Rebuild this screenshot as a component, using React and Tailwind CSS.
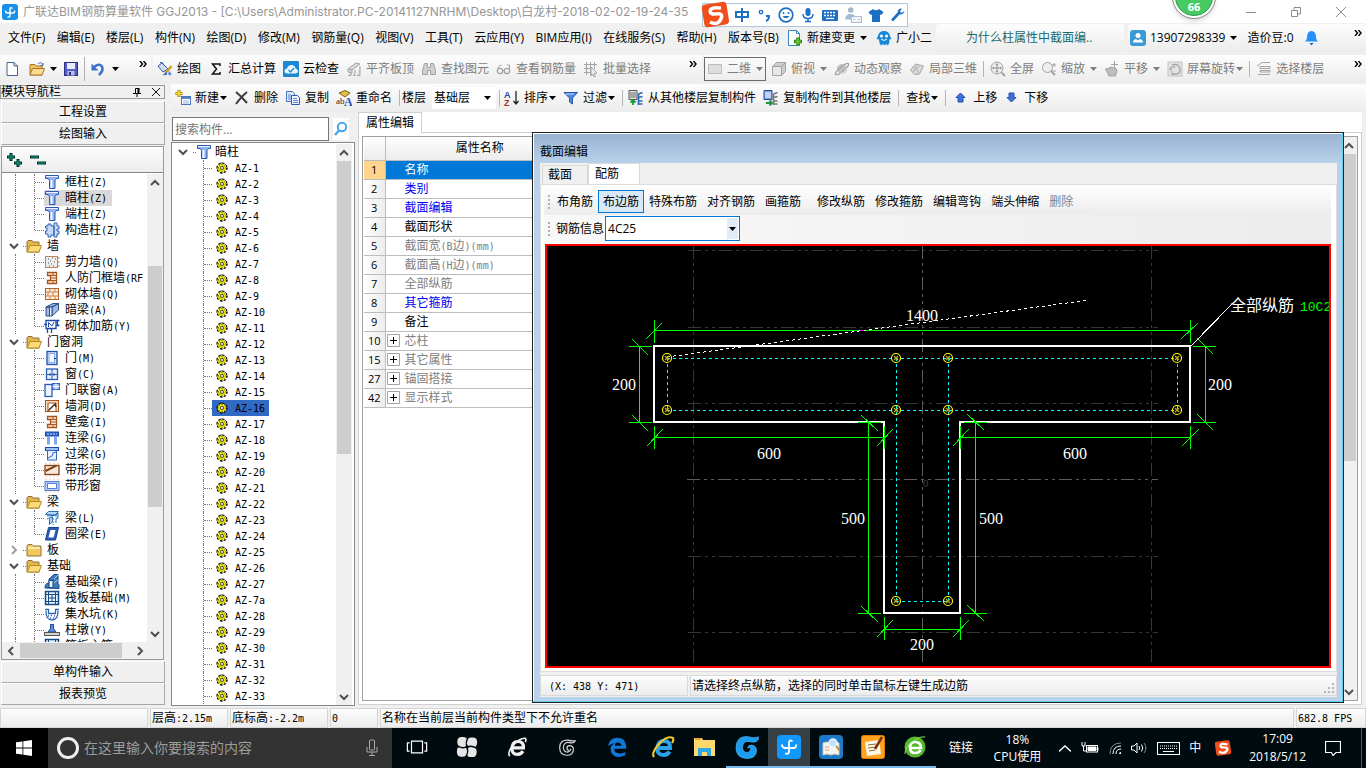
import React from "react";

/* ---------- text helpers ---------- */

// Latin runs are set in a half-width mono face beside the full-width characters.
function Song({ children }) {
  const parts = String(children).match(/[\x20-\x7e]+|[^\x20-\x7e]+/g) || [];
  return (
    <span className="whitespace-pre">
      {parts.map((p, i) =>
        /^[\x20-\x7e]/.test(p) ? (
          <span key={i} className="font-['DejaVu_Sans_Mono',monospace] text-[10px]">
            {p}
          </span>
        ) : (
          p
        )
      )}
    </span>
  );
}

/* ---------- icons ---------- */

function Svg({ size = 16, children, box = 16 }) {
  return (
    <svg width={size} height={size} viewBox={`0 0 ${box} ${box}`} fill="none" className="shrink-0" aria-hidden="true">
      {children}
    </svg>
  );
}

const B = "#2f62b5";
const G = "#a3a3a3";

const icons = {
  app: (
    <Svg>
      <rect width="16" height="16" rx="3" fill="#1a8fe8" />
      <path d="M8 4v7.500q0 2-2.500 1.500M3.500 6.500q0 2.500 2 2.500h5.500q2 0 1.500-2.500M10.500 4.500Q8 2.500 8 5" stroke="#fff" strokeWidth="1.400" />
    </Svg>
  ),
  file: (
    <Svg>
      <path d="M3 1.500h7l3.500 3.500v9.500H3z" fill="#fff" stroke="#46638c" />
      <path d="M10 1.500V5h3.500" stroke="#46638c" />
    </Svg>
  ),
  open: (
    <Svg>
      <path d="M1 3.500h5l1 1.500h6v9H1z" fill="#f2c462" stroke="#a5772a" />
      <path d="M3.500 7.500h12L13 14H1z" fill="#fbdc8c" stroke="#a5772a" />
      <path d="M9 3q3-3 5 1m0-2v2.500h-2.500" stroke="#4a6ea8" />
    </Svg>
  ),
  save: (
    <Svg>
      <rect x="1.500" y="1.500" width="13" height="13" fill="#5a5fc8" stroke="#2d2f8a" />
      <rect x="4" y="2" width="8" height="6" fill="#e8ecff" />
      <rect x="4.500" y="10" width="7" height="4.500" fill="#b9bde8" />
      <rect x="6" y="11" width="2" height="3.500" fill="#2d2f8a" />
    </Svg>
  ),
  undo: (
    <Svg>
      <path d="M3.500 6.500Q9 1.500 12 5.500 14 9.500 9 14" stroke="#3f6fd0" strokeWidth="2.600" />
      <path d="M1.500 2.500v7h7z" fill="#3f6fd0" />
    </Svg>
  ),
  paint: (
    <Svg>
      <path d="M1 5l4-3 6 6-5 3z" fill="#cfe0f6" stroke="#385f9c" />
      <path d="M3 1.500q3-1 4 3" stroke="#385f9c" />
      <path d="M14.500 5l-6 7" stroke="#d89c2c" strokeWidth="2.500" />
      <path d="M9 11l-3.500 3.500 5-1z" fill="#2c62b8" />
      <path d="M12 10q3 2 2 4.500l-3-1z" fill="#4a8fe0" />
    </Svg>
  ),
  sigma: (
    <Svg>
      <path d="M12 5V3H4.500l4 5-4 5H12v-2" stroke="#111" strokeWidth="1.500" />
    </Svg>
  ),
  cloud: (
    <Svg>
      <rect width="16" height="16" rx="1" fill="#1d88d2" />
      <path d="M4.500 12.500q-3 0-3-2.500t2.500-2.500Q5 4 8.500 4T12.500 7.500q2.500.500 2.500 2.500t-3 2.500z" fill="#eaf6ff" />
      <path d="M5.500 9l2 2 3.500-4" stroke="#1d88d2" strokeWidth="1.300" />
    </Svg>
  ),
  slab: (
    <Svg>
      <path d="M2 8l8-6 4 1-8 6zM2 8v3l4 1V9M2 14.500h3V12m2 2.500h2V9m2 5.500h3V5" fill="#dcdcdc" stroke={G} />
    </Svg>
  ),
  binocular: (
    <Svg>
      <path d="M3.500 2.500h3v4h3v-4h3l2 7v4h-5v-4h-3v4h-5v-4z" fill="#cfcfcf" stroke={G} />
    </Svg>
  ),
  glasses: (
    <Svg>
      <circle cx="4" cy="10" r="2.700" stroke={G} strokeWidth="1.300" />
      <circle cx="11" cy="10" r="2.700" stroke={G} strokeWidth="1.300" />
      <path d="M1.500 9q1-5 4-5M13.500 10V4H11M6.500 9.500h2" stroke={G} />
    </Svg>
  ),
  gridSel: (
    <Svg>
      <path d="M1 3.500h13M1 7.500h9M1 11.500h7M3.500 1v13M7.500 1v13M11.500 1v7" stroke={G} />
      <path d="M8 6l6 6-3 .500 1.500 3-1.500.500-1.500-3L8 15z" fill="#eee" stroke={G} />
    </Svg>
  ),
  flat: (
    <Svg>
      <rect x="1.500" y="3.500" width="13" height="9" fill="#dedede" stroke="#bdbdbd" />
    </Svg>
  ),
  cube: (
    <Svg>
      <path d="M1.500 5.500h9v9h-9z" fill="#e8e8e8" stroke={G} />
      <path d="M1.500 5.500l4-4h9l-4 4zM10.500 5.500l4-4v9l-4 4z" fill="#cdcdcd" stroke={G} />
    </Svg>
  ),
  orbit: (
    <Svg>
      <circle cx="8" cy="8" r="5" fill="#c4c4c4" />
      <path d="M1.500 13.500q-1-2 5-7t8-4q1 2-4.500 7t-8.500 4z" stroke={G} strokeWidth="1.300" />
      <path d="M6 13q5-1 7-6" stroke="#eee" />
    </Svg>
  ),
  local3d: (
    <Svg>
      <path d="M1.500 9l5-6 8 2-4 8-5 .500z" fill="#ddd" stroke={G} />
      <path d="M4 6l7 6M8 3.500L5 11M9 12l-2-8M3 11l9-7" stroke="#bbb" />
    </Svg>
  ),
  full: (
    <Svg>
      <circle cx="7" cy="7" r="6" fill="#eee" stroke={G} />
      <path d="M7 3v8M3 7h8M6 4l1-1.500L8 4M6 10l1 1.500L8 10M4 6L2.500 7 4 8M10 6l1.500 1L10 8" stroke="#8f8f8f" />
      <path d="M11.500 11.500l3.500 3.500" stroke={G} strokeWidth="2" />
    </Svg>
  ),
  zoom: (
    <Svg>
      <circle cx="6.500" cy="6.500" r="5" fill="#eee" stroke={G} />
      <path d="M10 10l4 4" stroke={G} strokeWidth="2" />
      <path d="M11 4h4M13 2v4M11 10h4" stroke={G} />
    </Svg>
  ),
  pan: (
    <Svg>
      <path d="M1.500 8q1.500-1.500 3.500 0l1-2 6 1.500 1 2.500-1.500 5H5z" fill="#bdbdbd" stroke={G} />
      <path d="M10.500 0v7M7 3.500h7" stroke={G} />
    </Svg>
  ),
  rotate: (
    <Svg>
      <rect x="1" y="1" width="14" height="14" fill="#e2e2e2" stroke="#c4c4c4" />
      <path d="M5 4q7-2 8 4t-7 5M3 9q0-4 5-3" stroke={G} strokeWidth="1.300" />
      <path d="M5 10v4l3-1M3 9l2-1" stroke={G} />
    </Svg>
  ),
  floors: (
    <Svg>
      <path d="M1 5l5-3.500h8M4 5.500h10v2H4zM4 9.500h10v1.500H4zM2 13.500h12" stroke={G} />
    </Svg>
  ),
  newItem: (
    <Svg>
      <path d="M4 0v7M.500 3.500h7" stroke="#9a7d00" strokeWidth="3" />
      <path d="M4 .500v6M1 3.500h6" stroke="#ffe33c" strokeWidth="1.500" />
      <rect x="6.500" y="6.500" width="9" height="8" fill="#fff" stroke="#4a74bd" />
      <path d="M7 8h8" stroke="#5b86cc" strokeWidth="2" />
      <path d="M8 11h6M8 13h6" stroke="#8fb0e0" />
    </Svg>
  ),
  del: (
    <Svg>
      <path d="M2 2q5 4 11 11M13 2Q8 6 2 14" stroke="#3c3c3c" strokeWidth="2" />
    </Svg>
  ),
  copy: (
    <Svg>
      <path d="M1.500 1.500h6l2 2v8h-8z" fill="#dce8fa" stroke="#4a74bd" />
      <path d="M6.500 5.500h6l2 2v7h-8z" fill="#eef4ff" stroke="#2e5ba8" />
      <path d="M3 5h3M3 7h3M3 9h3M8 8.500h4M8 10.500h5M8 12.500h5" stroke="#5b86cc" />
    </Svg>
  ),
  rename: (
    <Svg>
      <path d="M3 3l6-2.500 5 2.500-5 4z" fill="#e3bd4a" stroke="#7d6018" />
      <text x="0" y="14" fontSize="9" fill="#222" fontFamily="Liberation Serif, serif">ab</text>
      <text x="8" y="15.500" fontSize="12" fontWeight="bold" fill="#2b55b0" fontFamily="Liberation Serif, serif">A</text>
    </Svg>
  ),
  sort: (
    <Svg>
      <text x="0" y="7.500" fontSize="9" fontWeight="bold" fill="#24489c" fontFamily="Liberation Sans, sans-serif">A</text>
      <text x="0" y="16" fontSize="9" fontWeight="bold" fill="#a3302c" fontFamily="Liberation Sans, sans-serif">Z</text>
      <path d="M12 1v13M9.500 11l2.500 3 2.500-3" stroke="#222" strokeWidth="1.300" />
    </Svg>
  ),
  filter: (
    <Svg>
      <path d="M1 2.500h13.500L9.500 8v6l-3-2V8z" fill="#4f88e0" stroke="#2658ae" />
      <path d="M3 4h8" stroke="#c3dafc" />
    </Svg>
  ),
  floorCopy: (
    <Svg>
      <path d="M1 .500h8v9H1z" fill="#e6e6e6" stroke="#555" />
      <path d="M2 3h6M2 5h6M2 7h6" stroke="#666" />
      <path d="M5 10v5M2.500 12.500L5 10l2.500 2.500" stroke="#189a3c" strokeWidth="1.800" />
      <path d="M10.500 4l4-1.500M10.500 7.500l4-1M10.500 11h4M10.500 14h4M10.500 4v11" stroke="#2f67b8" strokeWidth="1.700" />
    </Svg>
  ),
  copyFloor: (
    <Svg>
      <path d="M1 .500h8v9H1z" fill="#7ea6e0" stroke="#24489c" />
      <path d="M2 3h6M2 5h6M2 7h6" stroke="#fff" />
      <path d="M3 13h6M6.500 10.500L9 13l-2.500 2.500" stroke="#189a3c" strokeWidth="1.800" />
      <path d="M10.500 4l4-1.500M10.500 7.500l4-1M10.500 11h4M10.500 14h4M10.500 4v11" stroke="#777" strokeWidth="1.700" />
    </Svg>
  ),
  up: (
    <Svg>
      <path d="M7.500 3l4.500 4.500h-2V12H5V7.500H3z" fill="#3f6fd8" stroke="#2850a8" />
    </Svg>
  ),
  down: (
    <Svg>
      <path d="M7.500 12L12 7.500h-2V3H5v4.500H3z" fill="#3f6fd8" stroke="#2850a8" />
    </Svg>
  ),
  change: (
    <Svg>
      <path d="M1.500.500h8l3 3v12h-11z" fill="#fff" stroke="#3787c0" />
      <path d="M9.500.500v3h3" stroke="#3787c0" />
      <path d="M11 7.500v8M7 11.500h8" stroke="#2f7d12" strokeWidth="3.500" />
      <path d="M11 8.500v6M8 11.500h6" stroke="#61c531" strokeWidth="2" />
    </Svg>
  ),
  robot: (
    <Svg>
      <path d="M2 6q1-5 6-5t6 5l1.500 3-2 .500q0 4-1.500 6l-2-1.500-1.500 1.500-1.500-1.500-2 1.500q-2-2-2-6L.500 9z" fill="#1787d8" />
      <circle cx="5.500" cy="6" r="1.500" fill="#fff" />
      <circle cx="10.500" cy="6" r="1.500" fill="#fff" />
      <path d="M5 9q3 3 6 0" stroke="#fff" />
    </Svg>
  ),
  avatar: (
    <Svg>
      <rect width="16" height="16" rx="3" fill="#3a9ad6" />
      <circle cx="8" cy="5.500" r="2.500" fill="#fff" />
      <path d="M3 12.500q0-2.500 3-3.500l2 1.500L10 9q3 1 3 3.500z" fill="#fff" />
    </Svg>
  ),
  bell: (
    <Svg>
      <path d="M7.500 1q4.500 .500 4.500 6 0 3 2 4.500H1q2-1.500 2-4.500 0-5.500 4.500-6z" fill="#2390ff" />
      <path d="M5.500 13h4l-2 2.500z" fill="#1560b8" />
    </Svg>
  ),
  search: (
    <Svg>
      <circle cx="9" cy="6" r="4.200" stroke="#45a7e6" strokeWidth="2" />
      <path d="M6 9.500l-4 4.500" stroke="#45a7e6" strokeWidth="2.500" />
    </Svg>
  ),
  folder: (
    <Svg>
      <path d="M1 3.500l1-1h4l1 1.500h6V14H1z" fill="#e7b64b" stroke="#8d7440" />
      <path d="M4 7.500h11.500L13 14H1z" fill="#ffd976" stroke="#b28a30" />
    </Svg>
  ),
  folderShut: (
    <Svg>
      <path d="M1 4l1-1.500h4L7.500 4H15v10H1z" fill="#f3c75c" stroke="#8d7440" />
      <path d="M2 6h12" stroke="#ffe9a8" strokeWidth="2" />
    </Svg>
  ),
  column: (
    <Svg>
      <path d="M1.500 1.500h13v3h-2l-1.500 2v8H5.500v-8l-1.500-2H1.500z" fill="#8fb3f2" stroke="#2f56ae" />
      <path d="M7.500 6v8" stroke="#f2f7ff" strokeWidth="2" />
      <path d="M2 2.500h12" stroke="#eaf2ff" />
    </Svg>
  ),
  gz: (
    <Svg>
      <path d="M4 2h3v2h3V1h3v3h2v3h-2v2h2v3h-2v3h-3v-2H7v2H4v-3H1.500V9H3V6H1.500V4H4z" fill="#c7daf8" stroke={B} />
      <path d="M10 4v9" stroke={B} strokeWidth="1.500" />
    </Svg>
  ),
  wallQ: (
    <Svg>
      <rect x="1.500" y="2.500" width="12" height="11" fill="#eee" stroke="#c2825a" />
      <path d="M4 5h1M8 4h1M6 7h1M10 8h1M4 9h1M7 10h1M9 12h1M5 12h1M11 5h1" stroke="#555" strokeWidth="1.200" />
      <path d="M14 4h1.500M14 8h1.500M14 12h1.500" stroke="#c25a20" />
    </Svg>
  ),
  frameWall: (
    <Svg>
      <path d="M3.500 2.500h9v11h-9v-3h3v-5h-3z" fill="#fbe6d4" stroke="#a9541c" strokeWidth="1.300" />
      <path d="M6.500 5.500h6M6.500 8h6M6.500 10.500h6M9 2.500v3M9 10.500v3" stroke="#a9541c" />
    </Svg>
  ),
  brick: (
    <Svg>
      <rect x="1.500" y="2.500" width="13" height="11" fill="#fdeedd" stroke="#b5632b" />
      <path d="M2 6h12M2 10h12M6 3v3M11 3v3M4 6v4M9 6v4M6 10v3M11 10v3" stroke="#c98251" />
    </Svg>
  ),
  hiddenBeam: (
    <Svg>
      <path d="M2 5l7-3.500h5.500L8 5zM2 5h3.500v9H2zM8 5l6.500-3.500V8L8 14z" fill="#9dbbe4" stroke="#2e4f86" />
      <path d="M5.500 5v9H8V5z" fill="#e9f1fc" stroke="#2e4f86" />
    </Svg>
  ),
  rebar: (
    <Svg>
      <path d="M2 2.500h10v8H2zM0 6.500h3M12 2.500h3.500M12 7.500h3.500M13.500 3v4M3.500 10.500V15M7.500 10.500V15" stroke="#1c49ad" strokeWidth="1.300" />
      <path d="M4.500 9V4.500L8 8l2-4" stroke="#1c49ad" />
    </Svg>
  ),
  door: (
    <Svg>
      <rect x="3" y="1.500" width="10" height="13" fill="#cfe0fa" stroke="#1c50b4" strokeWidth="1.300" />
      <rect x="5" y="3.500" width="5.500" height="9" fill="#f4f8ff" stroke="#87ace8" />
      <path d="M10 8.500h2" stroke="#143a84" />
    </Svg>
  ),
  window: (
    <Svg>
      <rect x="2.500" y="3" width="11" height="10.500" fill="#e6f0ff" stroke="#2c5cb8" strokeWidth="1.300" />
      <path d="M8 3v10M3 8.500h10" stroke="#2c5cb8" />
      <path d="M5 8.500h2M9 8.500h2" stroke="#2c5cb8" strokeWidth="2" />
    </Svg>
  ),
  doorWin: (
    <Svg>
      <rect x="1" y="2.500" width="7" height="12" fill="#eef4ff" stroke="#2c5cb8" strokeWidth="1.300" />
      <rect x="8.500" y="1.500" width="7" height="6" fill="#9fc0f5" stroke="#2c5cb8" />
      <path d="M12 1.500v6M8.500 4.500h7" stroke="#fff" />
    </Svg>
  ),
  hole: (
    <Svg>
      <rect x="1.500" y="2.500" width="13" height="11" fill="#f5dfca" stroke="#a9541c" />
      <rect x="4" y="5" width="8" height="8.500" fill="#fff" stroke="#a9541c" />
      <path d="M4.500 12.500L11 6l1 3" stroke="#33241a" strokeWidth="1.400" />
    </Svg>
  ),
  linkBeam: (
    <Svg>
      <rect x="1.500" y="2" width="13" height="4" fill="#2d66c8" stroke="#1a4aa2" />
      <path d="M3 4h10" stroke="#c5dbff" strokeDasharray="2 1" />
      <path d="M4.500 6v8.500M11.500 6v8.500" stroke="#7fa9ee" strokeWidth="3" />
    </Svg>
  ),
  lintel: (
    <Svg>
      <rect x="1.500" y="1.500" width="13" height="3" fill="#9dc0f6" stroke="#1a4aa2" />
      <path d="M3.500 4.500h9v9.500h-9z" fill="#eaf2ff" stroke="#2d66c8" />
      <path d="M4 12l4-2 1-3 3-1" stroke="#2d66c8" />
    </Svg>
  ),
  bandHole: (
    <Svg>
      <path d="M2 .500v15M6 .500v15M10 .500v15M14 .500v15" stroke="#f1b9a6" strokeDasharray="2 2" />
      <rect x="1" y="3.500" width="14" height="9" fill="#f8e8da" stroke="#87431a" strokeWidth="1.300" />
      <path d="M1.500 9l11-5.500" stroke="#87431a" strokeWidth="2" />
    </Svg>
  ),
  bandWin: (
    <Svg>
      <path d="M2 .500v15M6 .500v15M10 .500v15M14 .500v15" stroke="#f1b9a6" strokeDasharray="2 2" />
      <rect x="1" y="3.500" width="14" height="9" fill="#b5cef7" stroke="#5b7fd0" />
      <rect x="3.500" y="5.500" width="9" height="5" fill="#fff" stroke="#5b7fd0" />
    </Svg>
  ),
  beam: (
    <Svg>
      <path d="M1.500 4.500l3-3h10l-3 3.500zM3 6l10-1M5.500 8v6.500l3-3V7zM11 5l3-2v5l-2 1v4" fill="#b5d8f5" stroke="#2a6fb5" />
      <path d="M9 8v7M3 9l8-4" stroke="#2a6fb5" strokeDasharray="2 1" />
    </Svg>
  ),
  ring: (
    <Svg>
      <path d="M4.500 1.500h10l-3 12.500h-10z" fill="#2c5eb8" stroke="#173f8c" />
      <path d="M6.500 4h5L9.500 11.500h-5z" fill="#fff" />
    </Svg>
  ),
  fBeam: (
    <Svg>
      <path d="M1 14q0-5 4-5V5l5-4.500h4v9l1 1.500v3.500z" fill="#3d78b8" stroke="#174b86" />
      <path d="M5 6.500h4v7H5z" fill="#e6f1fc" stroke="#174b86" />
      <path d="M10 5l4-4M10 9l4-3" stroke="#a9cff2" />
    </Svg>
  ),
  raft: (
    <Svg>
      <rect x="1.500" y="1.500" width="13" height="13" fill="#e6f2fd" stroke="#174b86" strokeWidth="1.500" />
      <path d="M4.500 2v12M11.500 2v12M2 4.500h12M2 11.500h12M8 4.500v7M4.500 8h7" stroke="#174b86" />
    </Svg>
  ),
  pit: (
    <Svg>
      <path d="M1 3.500h3.500v4h7v-4H15M2 5q0 9 6 9t6-9" stroke="#2a66b8" strokeWidth="1.300" />
      <path d="M4 10h1M7 9.500h1M10 10h1M6 12h1M9 12h1" stroke="#2a66b8" strokeWidth="1.300" />
    </Svg>
  ),
  pier: (
    <Svg>
      <path d="M6.500 2.500h3v4l2.500 3.500H4L6.500 6.500z" fill="#5d8fd8" stroke="#1c4a94" />
      <rect x=".500" y="10.500" width="15" height="3" fill="#d3d3d3" stroke="#555" />
    </Svg>
  ),
  gear: (
    <Svg size={12} box={12}>
      <circle cx="6" cy="6" r="4.800" stroke="#111" strokeWidth="1.700" strokeDasharray="1.900 1.870" />
      <circle cx="6" cy="6" r="4.300" fill="#fff200" />
      <path d="M6 0v3M6 9v3M0 6h3M9 6h3M2.200 2.200l1.500 1.500M8.300 8.300l1.500 1.500M9.800 2.200L8.300 3.700M3.700 8.300L2.200 9.800" stroke="#222" strokeWidth=".800" />
      <circle cx="6" cy="6" r="1.800" fill="#fff" stroke="#222" strokeWidth=".800" />
      <circle cx="6" cy="6" r=".600" fill="#222" />
    </Svg>
  ),
};

function Caret() {
  return (
    <svg width="7" height="4" viewBox="0 0 7 4" className="shrink-0" aria-hidden="true">
      <path d="M0 0h7L3.500 4z" fill="currentColor" />
    </svg>
  );
}

function Chevron({ dir = "down", light = false }) {
  const d = {
    down: "M1 3l4 4 4-4",
    up: "M1 7l4-4 4 4",
    left: "M7 1L3 5l4 4",
    right: "M3 1l4 4-4 4",
  }[dir];
  return (
    <svg width="10" height="10" viewBox="0 0 10 10" fill="none" className="shrink-0" aria-hidden="true">
      <path d={d} stroke={light ? "#a0a0a0" : "#505050"} strokeWidth="2" />
    </svg>
  );
}

function More() {
  return (
    <button type="button" aria-label="更多" className="flex h-4 w-2">
      <svg width="8" height="6" viewBox="0 0 8 6" fill="none" aria-hidden="true">
        <path d="M1 0l2.500 3L1 6M4.500 0L7 3 4.500 6" stroke="#000" strokeWidth="1.400" />
      </svg>
    </button>
  );
}

function Tool({ icon, label, caret, wide, dim }) {
  return (
    <button type="button" className={`flex items-center gap-1 whitespace-nowrap ${dim ? "text-[#7d7d7d]" : "text-black"}`}>
      {icon && icons[icon]}
      <span className="flex items-center">
        {label}
        {caret && (
          <span className={wide ? "flex w-3 justify-end text-current" : "flex w-2 justify-end text-current"}>
            <Caret />
          </span>
        )}
      </span>
    </button>
  );
}

function Sep() {
  return <span className="h-4 w-px shrink-0 bg-[#b5b5b5]" />;
}

const band = "bg-gradient-to-b from-[#fdfdfd] to-[#ececec]";

/* ---------- header ---------- */

function ImeBar() {
  const c = "#1d6fc4";
  return (
    <div className="absolute left-[702px] top-[3px] flex h-6 items-center gap-[6px] border border-[#b4c6dc] bg-white pl-[31px] pr-px">
      <svg className="absolute -left-[2px] -top-[3px]" width="30" height="28" viewBox="0 0 30 28" aria-hidden="true">
        <g transform="rotate(-9 15 14)">
          <rect x="2" y="2" width="25" height="23" rx="4" fill="#f04e1a" />
          <path d="M21 8q-10-3-11 1t6 4 3 6-11 1" stroke="#fff" strokeWidth="3.500" fill="none" />
        </g>
      </svg>
      <Svg><path d="M2 5h12v5H2zM8 1v14" stroke={c} strokeWidth="2" /></Svg>
      <Svg><circle cx="5" cy="5" r="1.700" stroke={c} strokeWidth="1.300" /><path d="M10 9h3q0 4-3 5" stroke={c} strokeWidth="2" /></Svg>
      <Svg><circle cx="8" cy="8" r="6.800" stroke={c} strokeWidth="1.700" /><path d="M4.500 9q3.500 4.500 7 0z" fill={c} /><circle cx="5.500" cy="6" r="1" fill={c} /><circle cx="10.500" cy="6" r="1" fill={c} /></Svg>
      <Svg><rect x="5.500" y="1" width="5" height="8" rx="2.500" fill={c} /><path d="M3 7q0 4.500 5 4.500T13 7M8 11v3M5 14.500h6" stroke={c} strokeWidth="1.500" /></Svg>
      <Svg><rect x="0" y="3" width="16" height="11" rx="1" fill={c} /><path d="M2 5.500h12M2 8.500h12" stroke="#fff" strokeDasharray="2 1" strokeWidth="1.500" /><path d="M4 11.500h8" stroke="#fff" strokeWidth="1.300" /></Svg>
      <Svg size={18}><circle cx="6" cy="3.500" r="2.500" fill="#a9b8d2" /><path d="M1 12q0-5 5-5 3 0 4 2v3z" fill="#a9b8d2" /><rect x="6.500" y="9.500" width="9" height="5" fill="#fff" stroke="#a9b8d2" /><path d="M8 12h2M12 12h2" stroke="#a9b8d2" /></Svg>
      <Svg><path d="M5 2q3 2.500 6 0l4.500 3-2 3L12 7.500V15H4V7.500L2.500 8l-2-3z" fill={c} /></Svg>
      <Svg><path d="M14.500 4l-3 2-1.500-1.500L12 1.500Q8 1 7.500 5.500L1.500 12q-.500 2 2 2l6-6.500Q14 7.500 14.500 4z" fill={c} /></Svg>
    </div>
  );
}

function TitleBar() {
  return (
    <header className="relative flex h-[23px] shrink-0 items-center bg-white pl-[2px] pr-5">
      {icons.app}
      <h1 className="ml-[5px] whitespace-nowrap font-['Inter','Noto_Sans_CJK_SC',sans-serif] text-xs text-[#969696]">
        广联达BIM钢筋算量软件 GGJ2013 - [C:\Users\Administrator.PC-20141127NRHM\Desktop\白龙村-2018-02-02-19-24-35
      </h1>
      <ImeBar />
      <div className="absolute right-[150px] -top-[25px] z-10 flex size-11 items-end justify-center rounded-full border border-[#8a8a8a] bg-white p-[2px] shadow-md">
        <span className="flex size-full items-end justify-center rounded-full border border-[#2a9a4c] bg-[#45cb62] pb-px text-[11px] font-bold leading-[14px] text-white">66</span>
      </div>
      <div className="ml-auto flex items-center gap-[35px]">
        {["M0 5.500h10", "M.500 3.500h6v6h-6zM3 3V.500h6.500V7H7", "M0 0l10 10M10 0L0 10"].map((d, i) => (
          <button key={i} type="button" aria-label={["最小化", "还原", "关闭"][i]}>
            <svg width="10" height="10" viewBox="0 0 10 10" fill="none" aria-hidden="true">
              <path d={d} stroke="#8c8c8c" />
            </svg>
          </button>
        ))}
      </div>
    </header>
  );
}

const menus = ["文件(F)", "编辑(E)", "楼层(L)", "构件(N)", "绘图(D)", "修改(M)", "钢筋量(Q)", "视图(V)", "工具(T)", "云应用(Y)", "BIM应用(I)", "在线服务(S)", "帮助(H)", "版本号(B)"];

function MenuBar() {
  return (
    <nav className="flex h-[30px] shrink-0 items-center gap-1 bg-[#f0f0f0]">
      <div className="flex w-[783px] shrink-0 items-center justify-between pl-2 pr-1">
        {menus.map((m) => (
          <button key={m} type="button" className="whitespace-nowrap">{m}</button>
        ))}
      </div>
      <div className="flex w-[145px] shrink-0 items-center justify-between">
        <Tool icon="change" label="新建变更" caret wide />
        <Tool icon="robot" label="广小二" />
      </div>
      <div className={`flex h-7 flex-1 items-center rounded-sm pl-[30px] ${band}`}>
        <a href="#tip" className="whitespace-nowrap text-[#16696e]">为什么柱属性中截面编..</a>
      </div>
      <div className={`flex h-7 w-[238px] shrink-0 items-center gap-[10px] rounded-sm pl-[2px] pr-1 ${band}`}>
        <Tool icon="avatar" label="13907298339" caret wide />
        <span className="whitespace-nowrap">造价豆:0</span>
        <button type="button" aria-label="通知">{icons.bell}</button>
        <span className="ml-auto"><More /></span>
      </div>
    </nav>
  );
}

function MainToolbar() {
  return (
    <div className="flex h-[31px] shrink-0 items-center gap-[2px] bg-[#f0f0f0]">
      <div className={`flex h-7 w-[151px] shrink-0 items-center gap-[9px] pl-1 pr-1 ${band}`}>
        <button type="button" aria-label="新建工程">{icons.file}</button>
        <button type="button" aria-label="打开" className="flex items-center gap-[5px]">{icons.open}<Caret /></button>
        <button type="button" aria-label="保存" className="-ml-[3px]">{icons.save}</button>
        <span className="-mx-1 h-6 w-px bg-[#b0b0b0]" />
        <button type="button" aria-label="撤销" className="flex items-center gap-[6px]">{icons.undo}<Caret /></button>
        <span className="ml-auto"><More /></span>
      </div>
      <div className={`flex h-7 w-[549px] shrink-0 items-center gap-[7px] pl-1 pr-[5px] ${band}`}>
        <Tool icon="paint" label="绘图" />
        <Tool icon="sigma" label="汇总计算" />
        <Tool icon="cloud" label="云检查" />
        <Tool icon="slab" label="平齐板顶" dim />
        <Tool icon="binocular" label="查找图元" dim />
        <Tool icon="glasses" label="查看钢筋量" dim />
        <Tool icon="gridSel" label="批量选择" dim />
        <span className="ml-auto"><More /></span>
      </div>
      <div className={`flex h-7 min-w-0 flex-1 items-center gap-[7px] pr-1 ${band}`}>
        <span className="-mr-[2px] flex h-6 items-center border border-[#6b6b6b] px-[2px]">
          <Tool icon="flat" label="二维" caret wide dim />
        </span>
        <Tool icon="cube" label="俯视" caret wide dim />
        <Tool icon="orbit" label="动态观察" dim />
        <Tool icon="local3d" label="局部三维" dim />
        <span className="-mx-px flex"><Sep /></span>
        <Tool icon="full" label="全屏" dim />
        <Tool icon="zoom" label="缩放" caret wide dim />
        <Tool icon="pan" label="平移" caret wide dim />
        <Tool icon="rotate" label="屏幕旋转" caret dim />
        <span className="-mx-px flex"><Sep /></span>
        <Tool icon="floors" label="选择楼层" dim />
        <span className="ml-auto"><More /></span>
      </div>
    </div>
  );
}

/* ---------- scroll bars ---------- */

function VBar({ thumb }) {
  return (
    <div className="flex w-4 shrink-0 flex-col items-center bg-[#f0f0f0]" aria-hidden="true">
      <span className="flex h-[17px] items-center"><Chevron dir="up" /></span>
      <div className="flex w-full min-h-0 flex-1 flex-col px-px">
        <div className={`w-full bg-[#cdcdcd] ${thumb}`} />
      </div>
      <span className="flex h-[17px] items-center"><Chevron /></span>
    </div>
  );
}

/* ---------- module navigation ---------- */

const navTree = [
  { icon: "column", t: "框柱(Z)" },
  { icon: "column", t: "暗柱(Z)", on: true },
  { icon: "column", t: "端柱(Z)" },
  { icon: "gz", t: "构造柱(Z)", last: true },
  { t: "墙", group: true },
  { icon: "wallQ", t: "剪力墙(Q)" },
  { icon: "frameWall", t: "人防门框墙(RF" },
  { icon: "brick", t: "砌体墙(Q)" },
  { icon: "hiddenBeam", t: "暗梁(A)" },
  { icon: "rebar", t: "砌体加筋(Y)", last: true },
  { t: "门窗洞", group: true },
  { icon: "door", t: "门(M)" },
  { icon: "window", t: "窗(C)" },
  { icon: "doorWin", t: "门联窗(A)" },
  { icon: "hole", t: "墙洞(D)" },
  { icon: "frameWall", t: "壁龛(I)" },
  { icon: "linkBeam", t: "连梁(G)" },
  { icon: "lintel", t: "过梁(G)" },
  { icon: "bandHole", t: "带形洞" },
  { icon: "bandWin", t: "带形窗", last: true },
  { t: "梁", group: true },
  { icon: "beam", t: "梁(L)" },
  { icon: "ring", t: "圈梁(E)", last: true },
  { t: "板", group: true, shut: true },
  { t: "基础", group: true },
  { icon: "fBeam", t: "基础梁(F)" },
  { icon: "raft", t: "筏板基础(M)" },
  { icon: "pit", t: "集水坑(K)" },
  { icon: "pier", t: "柱墩(Y)" },
  { icon: "raft", t: "筏板主筋(R)" },
];

function NavRow({ row }) {
  if (row.group) {
    return (
      <li className="flex h-4 items-center">
        <span className="flex w-[19px] pl-[5px]"><Chevron dir={row.shut ? "right" : "down"} light={row.shut} /></span>
        <span className="w-[3px] border-t border-dotted border-[#777]" />
        {row.shut ? icons.folderShut : icons.folder}
        <span className="ml-[5px]">{row.t}</span>
      </li>
    );
  }
  return (
    <li className="flex h-4 items-center">
      <span className="h-full w-3 shrink-0 border-r border-dotted border-[#777]" />
      <span className="h-full w-[19px] shrink-0">
        <span className={`block border-r border-dotted border-[#777] ${row.last ? "h-1/2" : "h-full"}`} />
      </span>
      <span className="w-[9px] shrink-0 border-t border-dotted border-[#777]" />
      <span className={`flex h-full items-center gap-[5px] pr-[5px] ${row.on ? "bg-[#d9d9d9]" : ""}`}>
        {icons[row.icon]}
        <Song>{row.t}</Song>
      </span>
    </li>
  );
}

function NavButton({ children }) {
  return (
    <button type="button" className="flex h-[22px] shrink-0 items-center justify-center border border-[#a8a8a8] border-l-white border-t-white bg-[#f0f0f0]">
      {children}
    </button>
  );
}

function ModuleNav() {
  return (
    <aside className="flex w-[165px] shrink-0 flex-col pb-[2px] pt-px">
      <div className="flex h-[14px] shrink-0 items-center border border-[#9a9a9a]">
        <h2 className="leading-none">模块导航栏</h2>
        <span className="ml-auto flex items-center gap-[10px] pr-1">
          <svg width="9" height="10" viewBox="0 0 9 10" fill="none" aria-hidden="true">
            <path d="M2.500 6V1.500h3V6M0 6.500h8M4 7v3" stroke="#000" />
            <path d="M5.500 1v5" stroke="#000" strokeWidth="2" />
          </svg>
          <svg width="8" height="8" viewBox="0 0 8 8" aria-hidden="true">
            <path d="M0 0l8 8M8 0L0 8" stroke="#111" />
          </svg>
        </span>
      </div>
      <div className="mt-[2px] flex shrink-0 flex-col pl-px">
        <NavButton>工程设置</NavButton>
        <NavButton>绘图输入</NavButton>
      </div>
      <div className="mx-px mt-px flex min-h-0 flex-1 flex-col border border-[#9a9a9a]">
        <div className={`flex h-[25px] shrink-0 items-center gap-[7px] pl-1 ${band}`}>
          <button type="button" aria-label="全部展开">
            <svg width="17" height="16" viewBox="0 0 17 16" fill="none" aria-hidden="true">
              <path d="M5 1v8M1 5h8M12 7v8M8 11h8" stroke="#00332f" strokeWidth="3" />
              <path d="M5 2v6M2 5h6M12 8v6M9 11h6" stroke="#14a090" />
            </svg>
          </button>
          <button type="button" aria-label="全部折叠">
            <svg width="17" height="16" viewBox="0 0 17 16" fill="none" aria-hidden="true">
              <path d="M0 5h9M7 11h9" stroke="#00332f" strokeWidth="3" />
              <path d="M1 5h7M8 11h7" stroke="#14a090" />
            </svg>
          </button>
        </div>
        <div className="flex min-h-0 flex-1 flex-col border-t border-[#828790] bg-white">
          <div className="flex min-h-0 flex-1 pt-px">
            <ul className="min-w-0 flex-1 overflow-hidden whitespace-nowrap pl-[2px]">
              {navTree.map((r, i) => (
                <NavRow key={i} row={r} />
              ))}
            </ul>
            <VBar thumb="mt-[75px] h-[241px]" />
          </div>
          <div className="flex h-[17px] shrink-0 items-center bg-[#f0f0f0] pr-[18px]" aria-hidden="true">
            <span className="flex w-[18px] pl-1"><Chevron dir="left" /></span>
            <span className="h-[15px] w-[102px] bg-[#cdcdcd]" />
            <span className="ml-auto"><Chevron dir="right" /></span>
          </div>
        </div>
      </div>
      <div className="mt-px flex shrink-0 flex-col pl-px">
        <NavButton>单构件输入</NavButton>
        <NavButton>报表预览</NavButton>
      </div>
    </aside>
  );
}

/* ---------- component list ---------- */

const items = [];
for (let i = 1; i <= 33; i++) {
  items.push(`AZ-${i}`);
  if (i === 27) items.push("AZ-7a");
}

function ComponentToolbar() {
  return (
    <div className={`flex h-7 shrink-0 items-center gap-[7px] pl-1 ${band}`}>
      <Tool icon="newItem" label="新建" caret />
      <Tool icon="del" label="删除" />
      <Tool icon="copy" label="复制" />
      <Tool icon="rename" label="重命名" />
      <span className="flex items-center gap-[2px]">
        <Sep />
        <label htmlFor="floor">楼层</label>
        <span className="relative ml-1 flex w-16 items-center bg-white">
          <select id="floor" className="h-[22px] w-full appearance-none bg-transparent pl-[2px] text-xs outline-none">
            <option>基础层</option>
          </select>
          <span className="pointer-events-none absolute right-[5px]"><Caret /></span>
        </span>
      </span>
      <span className="-ml-1 flex items-center gap-1"><Sep /><Tool icon="sort" label="排序" caret /></span>
      <Tool icon="filter" label="过滤" caret />
      <Sep />
      <span className="-ml-[2px]"><Tool icon="floorCopy" label="从其他楼层复制构件" /></span>
      <Tool icon="copyFloor" label="复制构件到其他楼层" />
      <Sep />
      <Tool label="查找" caret />
      <Sep />
      <Tool icon="up" label="上移" />
      <Tool icon="down" label="下移" />
    </div>
  );
}

function ComponentList() {
  return (
    <section className="flex w-[184px] shrink-0 flex-col pb-px pt-[5px]">
      <div className="flex h-6 shrink-0 items-center pl-px">
        <input type="search" aria-label="搜索构件" placeholder="搜索构件..." className="h-6 w-[157px] border border-[#767676] bg-white pl-[2px] text-xs outline-none placeholder:text-[#767676]" />
        <button type="button" aria-label="搜索" className="ml-1 flex h-[22px] w-4 items-center bg-white">{icons.search}</button>
      </div>
      <div className="mt-px flex min-h-0 flex-1 border border-[#828790] bg-white pt-px">
        <div className="min-w-0 flex-1 overflow-hidden">
          <div className="flex h-4 items-center">
            <span className="flex w-[21px] pl-[6px]"><Chevron /></span>
            <span className="w-[3px] border-t border-dotted border-[#777]" />
            {icons.column}
            <span className="ml-[3px]">暗柱</span>
          </div>
          <ul>
            {items.map((t) => (
              <li key={t} className="flex h-4 items-center">
                <span className="h-full w-8 shrink-0 border-r border-dotted border-[#777]" />
                <span className="w-2 shrink-0 border-t border-dotted border-[#777]" />
                <span className={`flex h-full items-center gap-[7px] pl-[4px] pr-1 ${t === "AZ-16" ? "bg-[#316ac5]" : ""}`}>
                  {icons.gear}
                  <Song>{t}</Song>
                </span>
              </li>
            ))}
          </ul>
        </div>
        <VBar thumb="h-[293px]" />
        <span className="w-[2px]" />
      </div>
    </section>
  );
}

/* ---------- property table ---------- */

const props = [
  [1, "名称", "sel"],
  [2, "类别", "blue"],
  [3, "截面编辑", "blue"],
  [4, "截面形状", "black"],
  [5, "截面宽(B边)(mm)", "gray"],
  [6, "截面高(H边)(mm)", "gray"],
  [7, "全部纵筋", "gray"],
  [8, "其它箍筋", "blue"],
  [9, "备注", "black"],
  [10, "芯柱", "gray", true],
  [15, "其它属性", "gray", true],
  [27, "锚固搭接", "gray", true],
  [42, "显示样式", "gray", true],
];
const tone = {
  sel: "bg-[#0078d7] text-white",
  blue: "text-[#0000f0]",
  black: "text-black",
  gray: "text-[#808080]",
};

function PropertyTable() {
  return (
    <table className="w-[210px] table-fixed border-collapse self-start">
      <thead>
        <tr className="h-[23px] bg-gradient-to-b from-white to-[#ececec]">
          <th className="w-[21px] border-b border-r border-[#bdbdbd] p-0" />
          <th className="border-b border-[#bdbdbd] p-0 text-center font-normal">属性名称</th>
        </tr>
      </thead>
      <tbody>
        {props.map(([n, t, k, plus]) => (
          <tr key={n} className="h-[19px]">
            <th scope="row" className={`border-b border-r border-[#bdbdbd] p-0 text-center text-[11px] font-normal leading-none ${k === "sel" ? "bg-[#ffd58d]" : "bg-gradient-to-r from-white to-[#ececec]"}`}>
              {n}
            </th>
            <td className={`border-b border-[#bdbdbd] p-0 leading-none ${tone[k]}`}>
              <span className="flex items-center">
                <span className="flex w-[19px] pl-px">
                  {plus && (
                    <svg width="13" height="13" viewBox="0 0 13 13" fill="none" aria-hidden="true">
                      <path d="M.500.500h12v12H.500z" stroke="#a5a5a5" />
                      <path d="M3 6.500h7M6.500 3v7" stroke="#000" />
                    </svg>
                  )}
                </span>
                <Song>{t}</Song>
              </span>
            </td>
          </tr>
        ))}
      </tbody>
    </table>
  );
}

/* ---------- section drawing ---------- */

const bars = [
  [667, 358], [896, 358], [948, 358], [1177, 358],
  [667, 410], [896, 410], [948, 410], [1177, 410],
  [896, 601], [948, 601],
];

function SectionDrawing() {
  const dimText = { fill: "#fff", fontSize: 16, fontFamily: "Liberation Serif, serif" };
  return (
    <svg viewBox="547 246 782 420" preserveAspectRatio="xMinYMin meet" className="block size-full bg-black" role="img" aria-label="截面配筋图">
      <g shapeRendering="crispEdges" fill="none">
        <g stroke="#363636" strokeDasharray="13 4 3 4 3 4">
          <path d="M693.500 246V666M1151.500 246V666M688 250.500H1158M688 327.500H1158M688 403.500H1158M688 556.500H1158M688 632.500H1158" />
        </g>
        <path stroke="#5c5c5c" strokeDasharray="13 4 3 4 3 4" d="M922.500 246V666M687 479.500H1158" />
        <path stroke="#00ffff" strokeDasharray="3 3" d="M667 358.500H1177M667 410.500H1177M667.500 358V410M896.500 358V601M948.500 358V601M1177.500 358V410M896 601.500H948" />
        <path stroke="#fff" strokeWidth="2" d="M654 346H1190V422H960V613H884V422H654Z" />
        <path
          stroke="#00ff00"
          d="M654 330.500H1190M654.500 320V343M1190.500 320V343M639.500 346V422M629 346.500H652M629 422.500H652M1205.500 346V422M1193 346.500H1216M1193 422.500H1216M654 437.500H884M960 437.500H1190M654.500 426V449M884.500 426V449M960.500 426V449M1190.500 426V449M868.500 422V613M858 422.500H881M858 613.500H881M975.500 422V613M964 422.500H987M964 613.500H987M884 629.500H960M884.500 617V640M960.500 617V640M646 339L662 323M1181 339L1198 323M632 339L648 355M632 415L648 431M1197 338L1213 354M1197 414L1213 430M647 446L663 429M877 446L893 429M953 446L969 429M1182 446L1199 429M861 415L878 431M861 606L878 622M967 414L984 430M967 605L984 621M877 637L893 620M953 637L969 620"
        />
        <path stroke="#fff" strokeDasharray="3 3" d="M667 357L1089 300" />
        <path stroke="#ff00ff" d="M860 330.500H864" />
        <path stroke="#fff" d="M1191 346L1232 304" />
      </g>
      {bars.map(([x, y]) => (
        <g key={`${x}-${y}`}>
          <circle cx={x} cy={y} r="4.500" fill="none" stroke="#ffff00" strokeWidth="1.200" />
          <path d={`M${x - 2} ${y - 2}l4 4M${x + 2} ${y - 2}l-4 4`} stroke="#b9a82a" strokeWidth="1.400" />
        </g>
      ))}
      <g {...dimText}>
        <text x="906" y="321">1400</text>
        <text x="612" y="390">200</text>
        <text x="1208" y="390">200</text>
        <text x="757" y="459">600</text>
        <text x="1063" y="459">600</text>
        <text x="841" y="524">500</text>
        <text x="979" y="524">500</text>
        <text x="910" y="650">200</text>
      </g>
      <text x="923" y="487" fontSize="11" fill="#4a4038" fontFamily="Liberation Serif, serif">0</text>
      <text x="1230" y="311" fontSize="16" fill="#fff" fontFamily="Noto Sans CJK SC, sans-serif">全部纵筋</text>
      <text x="1300" y="311" fontSize="13" fill="#00ff00" fontFamily="Liberation Mono, monospace">10C25</text>
    </svg>
  );
}

/* ---------- section editor window ---------- */

function Grip() {
  return <span className="h-[14px] w-0 border-l-2 border-dotted border-[#b0b0b0]" />;
}

function SectionEditor() {
  const btn = "h-[23px] whitespace-nowrap px-[5px]";
  return (
    <section className="absolute bottom-1 left-[175px] right-[22px] top-5 flex flex-col border border-[#222] bg-[#b9d1ea] pb-[5px] pl-[7px] pr-[6px] shadow-[inset_-1px_-1px_0_#5fd0f0,inset_1px_1px_0_#ffffff]">
      <h2 className="-ml-[6px] -mr-[5px] mt-px flex h-[29px] shrink-0 items-center bg-gradient-to-b from-[#99b4d1] to-[#b9d1ea] pl-[6px] pt-[6px]">截面编辑</h2>
      <div className="flex min-h-0 flex-1 flex-col bg-[#f0f0f0] pb-px">
        <div className="flex h-[21px] shrink-0 items-end pl-[2px]" role="tablist">
          <button type="button" role="tab" className="flex h-[19px] w-[46px] items-center border border-b-0 border-[#d9d9d9] bg-[#f0f0f0] pl-[5px]">截面</button>
          <button type="button" role="tab" aria-selected="true" className="flex h-[21px] w-[52px] items-center border border-b-0 border-[#d9d9d9] bg-white pl-[6px]">配筋</button>
        </div>
        <div className="flex min-h-0 flex-1 flex-col border border-[#dcdcdc] bg-white py-[3px] pl-[3px] pr-[5px]">
          <div className={`flex h-[27px] shrink-0 items-center pl-1 ${band}`}>
            <Grip />
            <span className="w-[2px]" />
            <button type="button" className={btn}>布角筋</button>
            <button type="button" aria-pressed="true" className="h-[23px] whitespace-nowrap border border-[#0078d7] bg-[#d9e8f5] px-1">布边筋</button>
            <button type="button" className={btn}>特殊布筋</button>
            <button type="button" className={btn}>对齐钢筋</button>
            <button type="button" className={btn}>画箍筋</button>
            <span className="mx-[3px]"><Sep /></span>
            <button type="button" className={btn}>修改纵筋</button>
            <button type="button" className={btn}>修改箍筋</button>
            <button type="button" className={btn}>编辑弯钩</button>
            <button type="button" className={btn}>端头伸缩</button>
            <button type="button" className={`${btn} text-[#75879c]`}>删除</button>
          </div>
          <div className="flex h-[29px] shrink-0 items-center bg-gradient-to-r from-[#f8f8f8] to-[#ececec] pb-[2px] pl-1">
            <Grip />
            <label htmlFor="rebar" className="pl-[6px] whitespace-nowrap">钢筋信息</label>
            <span className="relative ml-px flex h-[25px] w-[135px] items-center border border-[#0078d7] bg-white">
              <select id="rebar" className="h-full w-full appearance-none bg-transparent pl-[2px] text-xs outline-none">
                <option>4C25</option>
              </select>
              <span className="pointer-events-none absolute right-px flex h-[21px] w-[11px] items-center justify-center bg-[#e0edf8]"><Caret /></span>
            </span>
          </div>
          <div className="ml-px min-h-0 flex-1 border-2 border-[#ff0000]">
            <SectionDrawing />
          </div>
        </div>
        <div className="mt-[3px] flex h-[21px] shrink-0 gap-[2px]">
          <div className={`flex w-[148px] items-center border border-[#d9d9d9] pl-2 ${band}`}><Song>(X: 438 Y: 471)</Song></div>
          <div className={`flex flex-1 items-center border border-[#d9d9d9] pl-px ${band}`}>
            请选择终点纵筋，选择的同时单击鼠标左键生成边筋
            <svg className="ml-auto self-end" width="12" height="12" viewBox="0 0 12 12" aria-hidden="true">
              <path d="M8 0h2v2H8zM4 4h2v2H4zM8 4h2v2H8zM0 8h2v2H0zM4 8h2v2H4zM8 8h2v2H8z" fill="#b5b5b5" />
            </svg>
          </div>
        </div>
      </div>
    </section>
  );
}

function PropertyPanel() {
  return (
    <section className="relative ml-[2px] flex min-w-0 flex-1 flex-col pb-[2px] pl-px pr-1">
      <div className="flex h-[21px] shrink-0 items-end bg-white">
        <h2 className="flex h-[21px] w-16 items-center border border-b-0 border-[#d0d0d0] bg-white pl-[7px]">属性编辑</h2>
        <span className="flex-1 border-b border-[#d0d0d0]" />
      </div>
      <div className="flex min-h-0 flex-1 border border-t-0 border-[#d0d0d0] bg-white p-[3px]">
        <div className="flex min-h-0 min-w-0 flex-1 justify-between border border-[#a0a0a0] pl-px">
          <PropertyTable />
          <VBar thumb="h-[307px]" />
        </div>
      </div>
      <SectionEditor />
    </section>
  );
}

/* ---------- bottom bars ---------- */

function StatusBar() {
  const cell = `flex items-center overflow-hidden whitespace-nowrap border border-[#d5d5d5] pl-px ${band}`;
  return (
    <footer className="flex h-[21px] shrink-0 gap-[2px] bg-[#f0f0f0] pt-px">
      <div className={`${cell} w-[148px]`} />
      <div className={`${cell} w-[78px]`}><Song>层高:2.15m</Song></div>
      <div className={`${cell} w-[98px]`}><Song>底标高:-2.2m</Song></div>
      <div className={`${cell} w-12`}><Song>0</Song></div>
      <div className={`${cell} flex-1`}>名称在当前层当前构件类型下不允许重名</div>
      <div className={`${cell} w-[70px]`}><Song>682.8 FPS</Song></div>
    </footer>
  );
}

const apps = [
  {
    name: "任务视图",
    art: (
      <>
        <path d="M6 5.500h12v13H6z" stroke="#fff" strokeWidth="1.300" />
        <path d="M4 7.500H1.500v9H4M20 7.500h2.500v9H20" stroke="#fff" strokeWidth="1.300" />
      </>
    ),
  },
  {
    name: "四叶草",
    art: (
      <g fill="#e6e6e6">
        <rect x="1.500" y="1" width="11" height="11" rx="4.500" />
        <rect x="12" y="1.500" width="11" height="11" rx="4.500" />
        <rect x="1" y="11.500" width="11" height="11" rx="4.500" />
        <rect x="11.500" y="12" width="11" height="11" rx="4.500" />
        <path d="M13 2q-3 5-1 10t-1 10M2 11q5 3 10 1t10 1" stroke="#000b10" strokeWidth="1.400" fill="none" />
      </g>
    ),
  },
  {
    name: "网页",
    art: (
      <>
        <path d="M6 13h13q.500-7-6-7-6 0-6.500 7t6 7q4 0 6-3.500" stroke="#f0f0f0" strokeWidth="3.500" />
        <path d="M4 22q-3-4 4-12T21 2.500q1.500 1.500 0 4" stroke="#f0f0f0" strokeWidth="1.800" />
      </>
    ),
  },
  {
    name: "搜索",
    art: (
      <>
        <path d="M21.500 5q-4 1-8-.500Q4 4 4 12.500T12 21q7 0 7-7.500-1-3-4-3t-3 2.500 2 2.500M21 5q-1 3-5 2.500-7-2-8 4.500 0 5.500 4.500 5.500Q16 17 16 14" stroke="#d8d8d8" strokeWidth="1.300" />
      </>
    ),
  },
  { name: "Edge", art: <path d="M2 11Q4 2 12.500 2T22 11v3H9q0 5 6 5 4 0 6-1.500V21q-3 2-8 2-8-1-8-9 0-4 5-6-4 0-8 3zM9.500 10.500H17Q16 7 13 7t-3.500 3.500z" fill="#0f78d7" fillRule="evenodd" /> },
  {
    name: "IE",
    art: (
      <>
        <path d="M6 13h13q.500-7-6-7-6 0-6.500 7t6 7q4 0 6-3.500" stroke="#2ba3ea" strokeWidth="4" />
        <path d="M3 22q-3-4 5-13T22 3q1 2-1 5" stroke="#f5c42c" strokeWidth="2.200" />
      </>
    ),
  },
  {
    name: "文件夹",
    art: (
      <>
        <path d="M1 3h8l1 2h12v16H1z" fill="#ffd86e" />
        <path d="M2 4h6" stroke="#e0962a" strokeWidth="1.500" />
        <path d="M5 21v-8h13v8h-4v-4H9v4z" fill="#2fa7e6" />
      </>
    ),
  },
  {
    name: "广联达",
    open: true,
    art: (
      <path d="M24 2q-1 6-7 5-9-2.500-9.500 5 0 5.500 5 5.500 3.500-.500 3-4-1-1.500-3-.500.500-3 4-3 5 .500 5 6Q21 23.500 12 23.500 1 23 1 12.500 1.500 1 12 1.500q6 2 12 .500z" fill="#1a9df0" stroke="#54c3ff" strokeWidth=".600" />
    ),
  },
  {
    name: "钢筋算量",
    open: true,
    active: true,
    art: (
      <>
        <rect width="24" height="24" rx="4" fill="#1297fb" />
        <path d="M12 7v9.500q0 3-4 2M5 9.500q0 3.500 3 3.500h8.500q3 0 2.500-3.500M15.500 6.500q-3.500-2.500-3.500 1" stroke="#fff" strokeWidth="1.800" />
      </>
    ),
  },
  {
    name: "图集",
    open: true,
    art: (
      <>
        <rect width="24" height="24" rx="4" fill="#1c78c8" />
        <path d="M4 8q4-2 8 0 4-2 8 0v12q-4-2-8 0-4-2-8 0z" fill="#f5f5ee" stroke="#ccb" />
        <circle cx="14" cy="8" r="4" fill="#bfe2ff" stroke="#e8f4ff" strokeWidth="1.500" />
        <path d="M17 11l4 5" stroke="#c98a3c" strokeWidth="2" />
        <path d="M6 12h4M6 15h4" stroke="#d98" />
      </>
    ),
  },
  {
    name: "记事",
    open: true,
    art: (
      <>
        <rect x=".500" y=".500" width="23" height="23" rx="2" fill="#ffa21f" stroke="#e07a00" />
        <path d="M4 7l14-2 2 14-14 2z" fill="#fff8e4" />
        <path d="M7 10l8-1M7 13l8-1M8 16l6-1" stroke="#8a6a3a" />
        <path d="M21 2l-7 12" stroke="#7a3410" strokeWidth="2.500" />
      </>
    ),
  },
  {
    name: "安全浏览器",
    open: true,
    art: (
      <>
        <circle cx="12" cy="12" r="10.500" fill="#55b82c" />
        <path d="M6 13h12q0-6-6-6-5 0-5 5.500T12 18q4 0 5.500-3" stroke="#fff" strokeWidth="2.700" />
        <path d="M2 19q0-8 8-13T22 2" stroke="#93e05a" />
      </>
    ),
  },
];

function Taskbar() {
  return (
    <footer className="flex h-10 shrink-0 items-center bg-[#000b10] text-xs text-white">
      <button type="button" aria-label="开始" className="flex h-full w-12 shrink-0 items-center justify-center bg-black">
        <svg width="16" height="16" viewBox="0 0 16 16" aria-hidden="true">
          <path d="M0 2.300L6.500 1.400V7.600H0zM7.300 1.300L16 0v7.600H7.300zM0 8.400h6.500v6.200L0 13.700zM7.300 8.400H16V16l-8.700-1.300z" fill="#fff" />
        </svg>
      </button>
      <div className="flex h-full w-[344px] shrink-0 items-center bg-[#333] pl-[9px] pr-[14px]">
        <span className="size-[22px] shrink-0 rounded-full border-[3px] border-[#f0f0f0]" />
        <input type="text" aria-label="在这里输入你要搜索的内容" placeholder="在这里输入你要搜索的内容" className="ml-[5px] min-w-0 flex-1 bg-transparent text-[14px] outline-none placeholder:text-[#9c9c9c]" />
        <svg width="12" height="18" viewBox="0 0 12 18" fill="none" aria-hidden="true">
          <rect x="3.500" y="1" width="5" height="10" rx="1" stroke="#aaa" />
          <path d="M1 8v5h10V8M6 13v3M3 16.500h6" stroke="#aaa" />
        </svg>
      </div>
      {apps.map((a, i) => (
        <button
          key={a.name}
          type="button"
          aria-label={a.name}
          className={`flex h-full shrink-0 items-center justify-center border-b-2 ${i < 5 ? "w-[50px]" : "w-[42px]"} ${a.active ? "bg-[#363f43]" : ""} ${a.open ? "border-[#76b9ed]" : "border-transparent"}`}
        >
          <Svg size={i < 5 ? 22 : 24} box={24}>{a.art}</Svg>
        </button>
      ))}
      <span className="ml-[13px] shrink-0 whitespace-nowrap">链接</span>
      <span className="ml-auto shrink-0 whitespace-nowrap text-center leading-[17px]">18%<br />CPU使用</span>
      <div className="ml-[18px] flex shrink-0 items-center gap-[9px]">
        <svg width="12" height="7" viewBox="0 0 12 7" fill="none" aria-hidden="true"><path d="M0 6.500L6 1l6 5.500" stroke="#fff" strokeWidth="1.300" /></svg>
        <svg width="18" height="12" viewBox="0 0 18 12" fill="none" className="mx-px" aria-hidden="true">
          <rect x="5.500" y="3.500" width="11" height="6.500" stroke="#fff" /><path d="M7 5h8v3.500H7zM17 5.500v3" fill="#fff" stroke="#fff" /><path d="M1 1v3h3V1M2.500 4v5H5M1 0v1M4 0v1" stroke="#fff" />
        </svg>
        <svg width="13" height="12" viewBox="0 0 13 12" fill="none" aria-hidden="true">
          <path d="M1 12Q1 1 12 1" stroke="#888" /><path d="M4 12q0-8 8-8M7 12q0-5 5-5" stroke="#fff" /><path d="M10 12q0-2 2-2v2z" fill="#fff" />
        </svg>
        <svg width="17" height="12" viewBox="0 0 17 12" fill="none" aria-hidden="true">
          <path d="M.500 4h2.500L6 1v10L3 8H.500zM8 4q1.500 2 0 4M10.500 2.500q2.500 3.500 0 7" stroke="#fff" /><path d="M13 1q4 5 0 10" stroke="#888" />
        </svg>
        <svg width="23" height="13" viewBox="0 0 23 13" fill="none" aria-hidden="true">
          <rect x=".500" y=".500" width="22" height="12" stroke="#fff" /><path d="M3 4h17M3 6.500h17" stroke="#fff" strokeDasharray="1 1" /><path d="M6 9.500h11" stroke="#fff" />
        </svg>
        <span className="mr-[5px]">中</span>
        <svg width="16" height="16" viewBox="0 0 16 16" aria-hidden="true">
          <rect x=".500" y="1" width="15" height="14" rx="2" fill="#f04e1a" transform="rotate(-8 8 8)" /><path d="M12.500 4.500q-6.500-1.500-7 .800t4 2.200 2 3.500-7.500.500" stroke="#fff" strokeWidth="2.200" fill="none" />
        </svg>
      </div>
      <span className="ml-[18px] shrink-0 whitespace-nowrap text-center leading-[18px]">17:09<br />2018/5/12</span>
      <button type="button" aria-label="通知中心" className="ml-[19px] shrink-0">
        <svg width="16" height="16" viewBox="0 0 16 16" fill="none" aria-hidden="true"><path d="M.500 1.500h15v11H11l-3 3-1.500-3h-6z" stroke="#fff" strokeWidth="1.200" /></svg>
      </button>
      <span className="ml-5 mr-1 h-full w-px shrink-0 bg-[#555]" />
    </footer>
  );
}

export default function App() {
  return (
    <div className="flex h-screen flex-col overflow-hidden bg-[#f0f0f0] font-['Open_Sans','Noto_Sans_CJK_SC',sans-serif] text-xs text-black">
      <TitleBar />
      <MenuBar />
      <MainToolbar />
      <main className="flex min-h-0 flex-1">
        <ModuleNav />
        <div className="ml-[6px] flex min-w-0 flex-1 flex-col">
          <ComponentToolbar />
          <div className="flex min-h-0 flex-1">
            <ComponentList />
            <PropertyPanel />
          </div>
        </div>
      </main>
      <StatusBar />
      <Taskbar />
    </div>
  );
}
